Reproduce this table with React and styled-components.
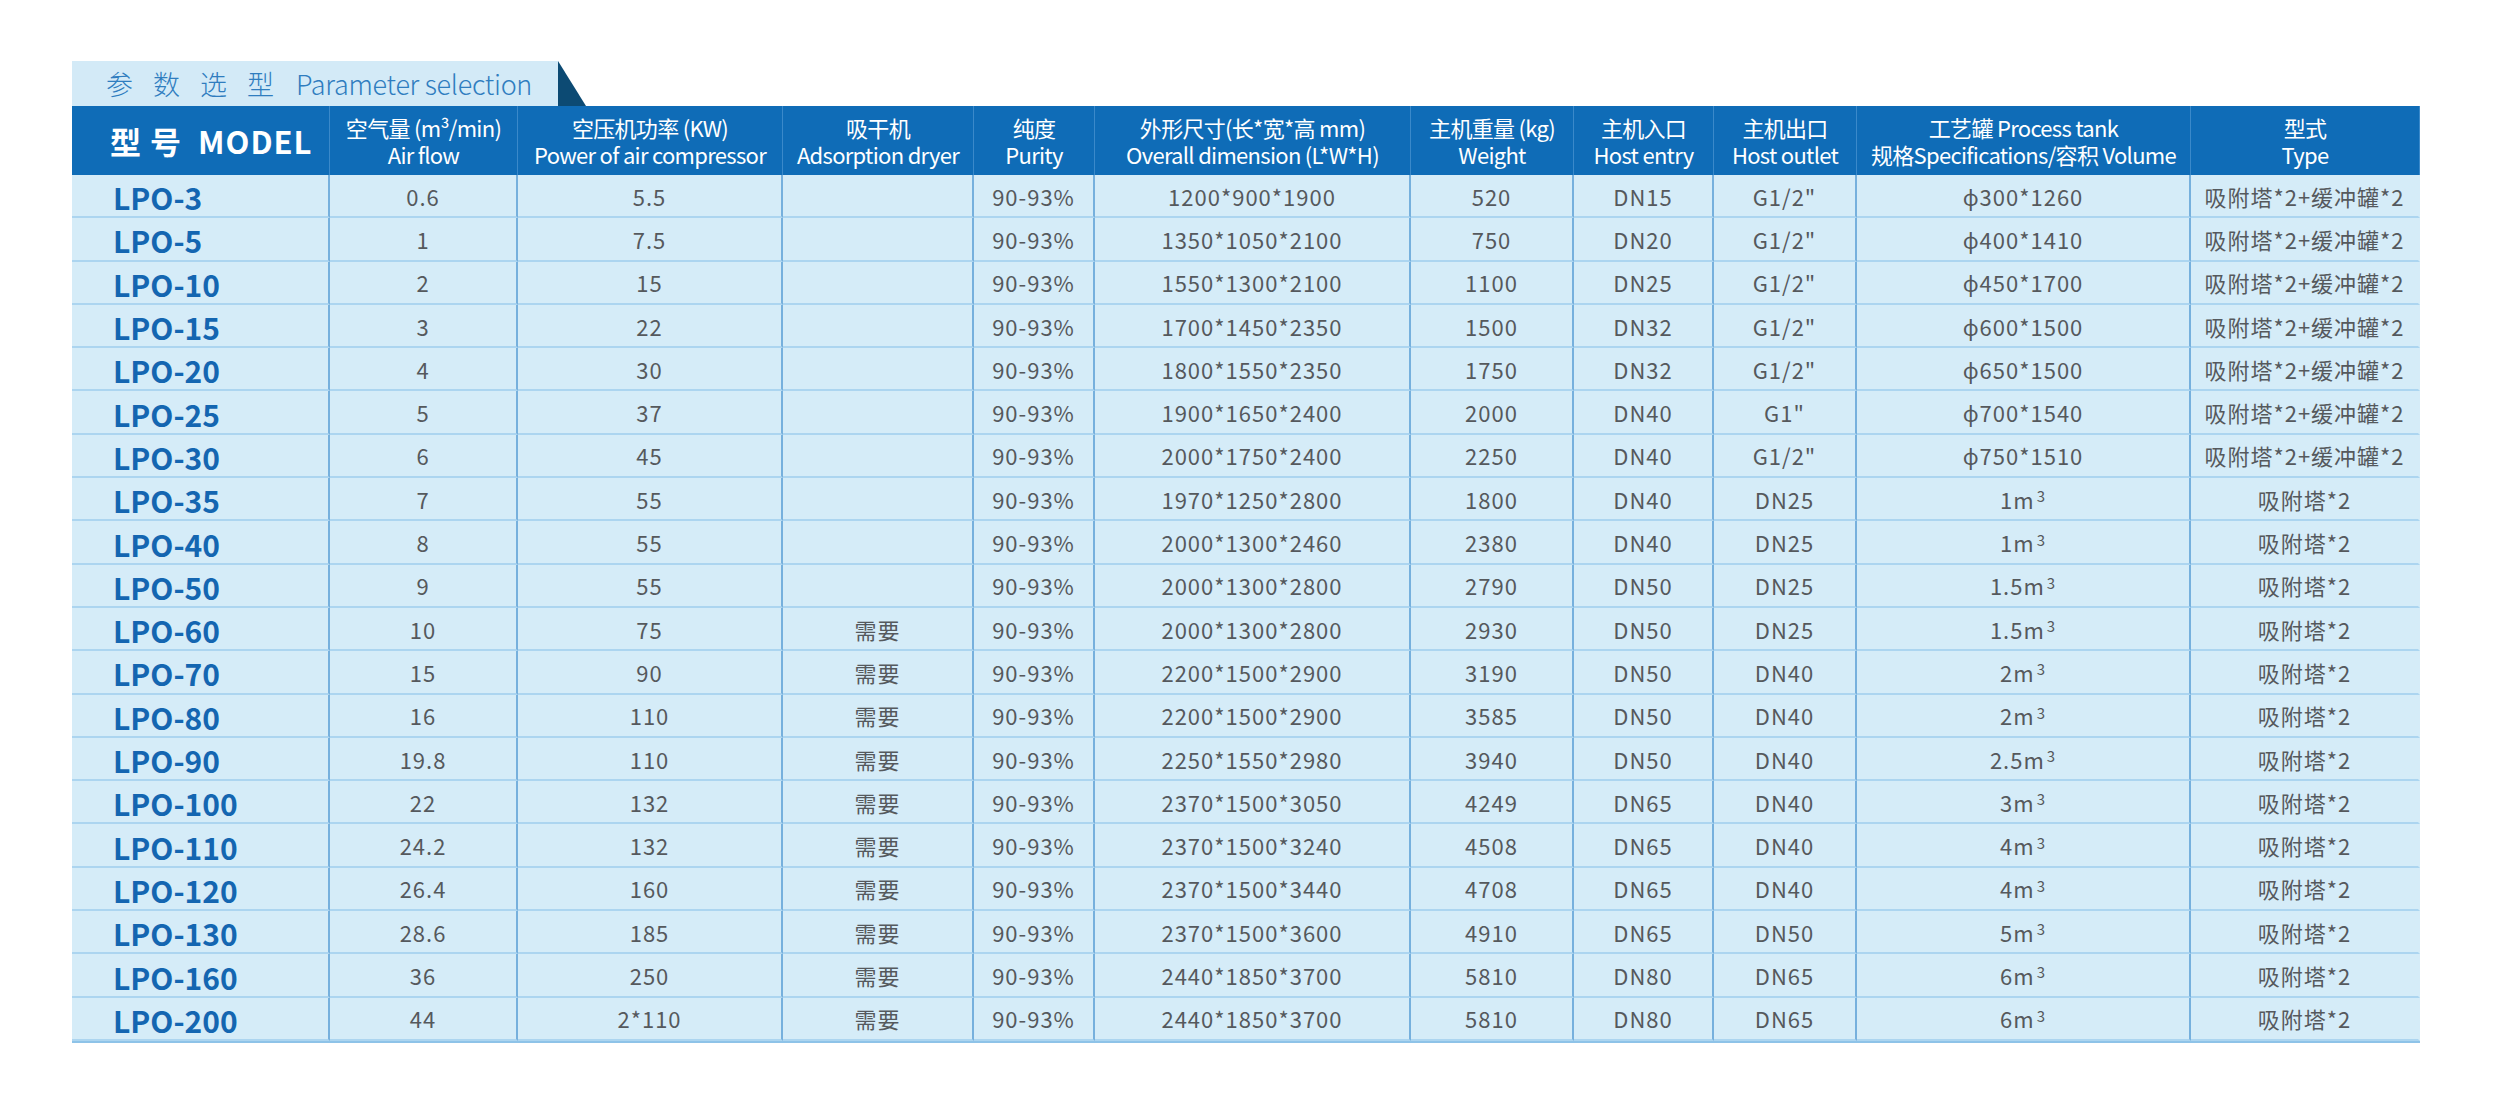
import React from "react"
import styled, { createGlobalStyle } from "styled-components"

const GlobalStyle = createGlobalStyle`
  body {
    margin: 0;
    background: #ffffff;
    font-family: "Noto Sans CJK SC", "Noto Sans", sans-serif;
  }
`

const columns = "258px 188px 265px 191px 121px 316px 163px 140px 143px 334px 229px"

const heads = [
  ["空气量 (m³/min)", "Air flow"],
  ["空压机功率 (KW)", "Power of air compressor"],
  ["吸干机", "Adsorption dryer"],
  ["纯度", "Purity"],
  ["外形尺寸(长*宽*高 mm)", "Overall dimension (L*W*H)"],
  ["主机重量 (kg)", "Weight"],
  ["主机入口", "Host entry"],
  ["主机出口", "Host outlet"],
  ["工艺罐 Process tank", "规格Specifications/容积 Volume"],
  ["型式", "Type"],
]

const BIG = "吸附塔*2+缓冲罐*2"
const SMALL = "吸附塔*2"

// model, flow, power, dryer, dimension, weight, entry, outlet, tank, type
const rows = [
  ["LPO-3", "0.6", "5.5", "", "1200*900*1900", "520", "DN15", 'G1/2"', "ϕ300*1260", BIG],
  ["LPO-5", "1", "7.5", "", "1350*1050*2100", "750", "DN20", 'G1/2"', "ϕ400*1410", BIG],
  ["LPO-10", "2", "15", "", "1550*1300*2100", "1100", "DN25", 'G1/2"', "ϕ450*1700", BIG],
  ["LPO-15", "3", "22", "", "1700*1450*2350", "1500", "DN32", 'G1/2"', "ϕ600*1500", BIG],
  ["LPO-20", "4", "30", "", "1800*1550*2350", "1750", "DN32", 'G1/2"', "ϕ650*1500", BIG],
  ["LPO-25", "5", "37", "", "1900*1650*2400", "2000", "DN40", 'G1"', "ϕ700*1540", BIG],
  ["LPO-30", "6", "45", "", "2000*1750*2400", "2250", "DN40", 'G1/2"', "ϕ750*1510", BIG],
  ["LPO-35", "7", "55", "", "1970*1250*2800", "1800", "DN40", "DN25", "1", SMALL],
  ["LPO-40", "8", "55", "", "2000*1300*2460", "2380", "DN40", "DN25", "1", SMALL],
  ["LPO-50", "9", "55", "", "2000*1300*2800", "2790", "DN50", "DN25", "1.5", SMALL],
  ["LPO-60", "10", "75", "需要", "2000*1300*2800", "2930", "DN50", "DN25", "1.5", SMALL],
  ["LPO-70", "15", "90", "需要", "2200*1500*2900", "3190", "DN50", "DN40", "2", SMALL],
  ["LPO-80", "16", "110", "需要", "2200*1500*2900", "3585", "DN50", "DN40", "2", SMALL],
  ["LPO-90", "19.8", "110", "需要", "2250*1550*2980", "3940", "DN50", "DN40", "2.5", SMALL],
  ["LPO-100", "22", "132", "需要", "2370*1500*3050", "4249", "DN65", "DN40", "3", SMALL],
  ["LPO-110", "24.2", "132", "需要", "2370*1500*3240", "4508", "DN65", "DN40", "4", SMALL],
  ["LPO-120", "26.4", "160", "需要", "2370*1500*3440", "4708", "DN65", "DN40", "4", SMALL],
  ["LPO-130", "28.6", "185", "需要", "2370*1500*3600", "4910", "DN65", "DN50", "5", SMALL],
  ["LPO-160", "36", "250", "需要", "2440*1850*3700", "5810", "DN80", "DN65", "6", SMALL],
  ["LPO-200", "44", "2*110", "需要", "2440*1850*3700", "5810", "DN80", "DN65", "6", SMALL],
]

const Page = styled.div`
  padding: 61px 0 0 72px;
  width: 2348px;
`

const TabRow = styled.div`
  display: flex;
  align-items: stretch;
  height: 45px;
`

const Tab = styled.div`
  width: 452px;
  padding-left: 34px;
  background: #d3eaf7;
  color: #2f7dbf;
  font-size: 27px;
  font-weight: 300;
  display: flex;
  align-items: center;
  white-space: nowrap;
`

const TabCn = styled.span`
  letter-spacing: 20px;
  margin-right: 2px;
`

const TabEn = styled.span`
  letter-spacing: -0.3px;
`

const Corner = styled.svg`
  display: block;
  width: 28px;
  height: 45px;
`

const Grid = styled.div`
  display: grid;
  grid-template-columns: ${columns};
  border-bottom: 2px solid #8ec3e8;
`

const Head = styled.div`
  height: 69px;
  background: #0f6cb7;
  color: #ffffff;
  font-size: 22px;
  font-weight: 400;
  line-height: 27px;
  letter-spacing: -0.7px;
  display: flex;
  flex-direction: column;
  align-items: center;
  justify-content: center;
  text-align: center;
  white-space: nowrap;
  border-right: 1px solid #3a89ca;
  &:last-child {
    border-right: none;
  }
`

const ModelHead = styled(Head)`
  align-items: flex-start;
  padding-left: 38px;
  font-size: 31px;
  font-weight: 700;
  letter-spacing: 1px;
`

const Cell = styled.div`
  height: 43.3px;
  box-sizing: border-box;
  background: #d5ecf8;
  border-bottom: 2px solid #acd5f0;
  border-right: 2px solid ${p => (p.$last ? "transparent" : "#76b0dd")};
  color: #55595d;
  font-size: 22px;
  letter-spacing: 1px;
  display: flex;
  align-items: center;
  justify-content: center;
  white-space: nowrap;
`

const ModelCell = styled(Cell)`
  justify-content: flex-start;
  padding: 3px 0 0 41px;
  color: #1466b1;
  font-size: 30px;
  font-weight: 700;
  letter-spacing: 0;
`

const Sup = styled.sup`
  font-size: 15px;
  margin-left: 2px;
  position: relative;
  top: -3px;
`

function Volume({ value, index }) {
  if (index < 7) return value
  return (
    <>
      {value}m<Sup>3</Sup>
    </>
  )
}

export default function App() {
  return (
    <Page>
      <GlobalStyle />
      <TabRow>
        <Tab>
          <TabCn>参数选型</TabCn>
          <TabEn>Parameter selection</TabEn>
        </Tab>
        <Corner viewBox="0 0 28 45" preserveAspectRatio="none">
          <polygon points="0,0 28,45 0,45" fill="#0c4a73" />
        </Corner>
      </TabRow>
      <Grid>
        <ModelHead>型 号&nbsp; MODEL</ModelHead>
        {heads.map(([cn, en]) => (
          <Head key={en}>
            <span>{cn}</span>
            <span>{en}</span>
          </Head>
        ))}
        {rows.map((r, i) => (
          <React.Fragment key={r[0]}>
            <ModelCell>{r[0]}</ModelCell>
            <Cell>{r[1]}</Cell>
            <Cell>{r[2]}</Cell>
            <Cell>{r[3]}</Cell>
            <Cell>90-93%</Cell>
            <Cell>{r[4]}</Cell>
            <Cell>{r[5]}</Cell>
            <Cell>{r[6]}</Cell>
            <Cell>{r[7]}</Cell>
            <Cell>
              <Volume value={r[8]} index={i} />
            </Cell>
            <Cell $last>{r[9]}</Cell>
          </React.Fragment>
        ))}
      </Grid>
    </Page>
  )
}
